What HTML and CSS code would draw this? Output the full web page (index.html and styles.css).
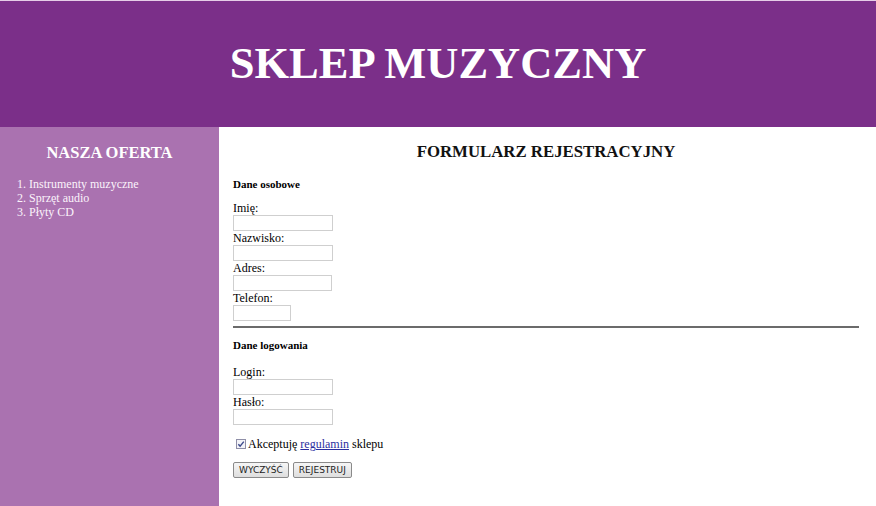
FILE: index.html
```html
<!DOCTYPE html>
<html lang="pl">
<head>
<meta charset="utf-8">
<title>Sklep muzyczny</title>
<link rel="stylesheet" href="styles.css">
</head>
<body>
<div class="page">
  <header class="banner">
    <h1 class="banner-title">SKLEP MUZYCZNY</h1>
  </header>
  <div class="layout">
    <aside class="sidebar">
      <h2 class="sidebar-title">NASZA OFERTA</h2>
      <ol class="offer-list">
        <li>Instrumenty muzyczne</li>
        <li>Sprzęt audio</li>
        <li>Płyty CD</li>
      </ol>
    </aside>
    <main class="content">
      <h2 class="form-title">FORMULARZ REJESTRACYJNY</h2>
      <form class="reg-form">
        <h3 class="section-title">Dane osobowe</h3>
        <label class="field-label">Imię:</label>
        <input class="field w100" type="text">
        <label class="field-label">Nazwisko:</label>
        <input class="field w100" type="text">
        <label class="field-label">Adres:</label>
        <input class="field w99" type="text">
        <label class="field-label">Telefon:</label>
        <input class="field w58" type="text">
        <hr class="divider">
        <h3 class="section-title second">Dane logowania</h3>
        <label class="field-label">Login:</label>
        <input class="field w100" type="text">
        <label class="field-label">Hasło:</label>
        <input class="field w100" type="password">
        <div class="accept">
          <span class="check"><svg width="10" height="10" viewBox="0 0 10 10"><rect x="0.5" y="0.5" width="9" height="9" fill="#f3f3f8" stroke="#8f8fa8"/><path d="M2.3 5.2 L4.1 7.1 L7.8 2.6" fill="none" stroke="#3c4a8c" stroke-width="1.4"/></svg></span>
          <span>Akceptuję <a href="#" class="link">regulamin</a> sklepu</span>
        </div>
        <div class="buttons">
          <button type="reset" class="btn">WYCZYŚĆ</button>
          <button type="button" class="btn">REJESTRUJ</button>
        </div>
      </form>
    </main>
  </div>
</div>
</body>
</html>
```
FILE: styles.css
```css
html, body {
  margin: 0;
  padding: 0;
  height: 100%;
}
body {
  font-family: "Liberation Serif", "Times New Roman", serif;
  background: #ffffff;
  color: #000;
}
.page {
  display: flex;
  flex-direction: column;
  min-height: 100%;
  border-top: 1px solid #e6cde8;
  box-sizing: border-box;
}
.banner {
  height: 126px;
  background: #7b2f89;
  display: flex;
  align-items: center;
  justify-content: center;
}
.banner-title {
  margin: 0;
  color: #fff;
  font-size: 44.5px;
  font-weight: bold;
  line-height: 1;
  padding-bottom: 1px;
}
.layout {
  flex: 1;
  display: flex;
}
.sidebar {
  width: 219px;
  flex: none;
  background: #aa72b0;
  color: #fbf3fb;
}
.sidebar-title {
  margin: 0;
  padding-top: 15px;
  text-align: center;
  font-size: 16.5px;
  line-height: 21px;
  font-weight: bold;
  color: #fff;
}
.offer-list {
  margin: 14px 0 0 0;
  padding-left: 17px;
  list-style-position: inside;
  font-size: 12px;
  line-height: 14px;
}
.content {
  flex: 1;
  padding: 14px 17px 0 14px;
}
.form-title {
  margin: 0;
  text-align: center;
  font-size: 16.8px;
  line-height: 21px;
  font-weight: bold;
  color: #111;
}
.reg-form {
  display: flex;
  flex-direction: column;
  align-items: flex-start;
}
.section-title {
  margin: 16px 0 10px 0;
  font-size: 11px;
  line-height: 13px;
  font-weight: bold;
}
.section-title.second {
  margin: 11px 0 13px 0;
}
.field-label {
  font-size: 12px;
  line-height: 14px;
}
.field {
  display: block;
  box-sizing: border-box;
  height: 16px;
  margin: 0;
  padding: 0 2px;
  border: 1px solid #cfcfcf;
  background: #fff;
  font-size: 11px;
}
.w100 { width: 100px; }
.w99 { width: 99px; }
.w58 { width: 58px; }
.divider {
  align-self: stretch;
  margin: 5px 0 0 0;
  height: 0;
  border: 0;
  border-top: 2px solid #6b6b6b;
}
.accept {
  margin-top: 12px;
  display: flex;
  align-items: center;
  gap: 2px;
  font-size: 12px;
  line-height: 14px;
}
.check {
  display: flex;
  margin-left: 3px;
  margin-top: -1px;
}
.link {
  color: #2b2fa0;
  text-decoration: underline;
}
.buttons {
  margin-top: 11px;
  display: flex;
  gap: 4px;
}
.btn {
  box-sizing: border-box;
  height: 16px;
  padding: 0 5px;
  margin: 0;
  border: 1px solid #8a8a8a;
  border-radius: 2px;
  background: linear-gradient(#f6f6f6, #dedede);
  font-family: "DejaVu Sans", "Liberation Sans", sans-serif;
  font-size: 9px;
  line-height: 13px;
  color: #222;
}
```
